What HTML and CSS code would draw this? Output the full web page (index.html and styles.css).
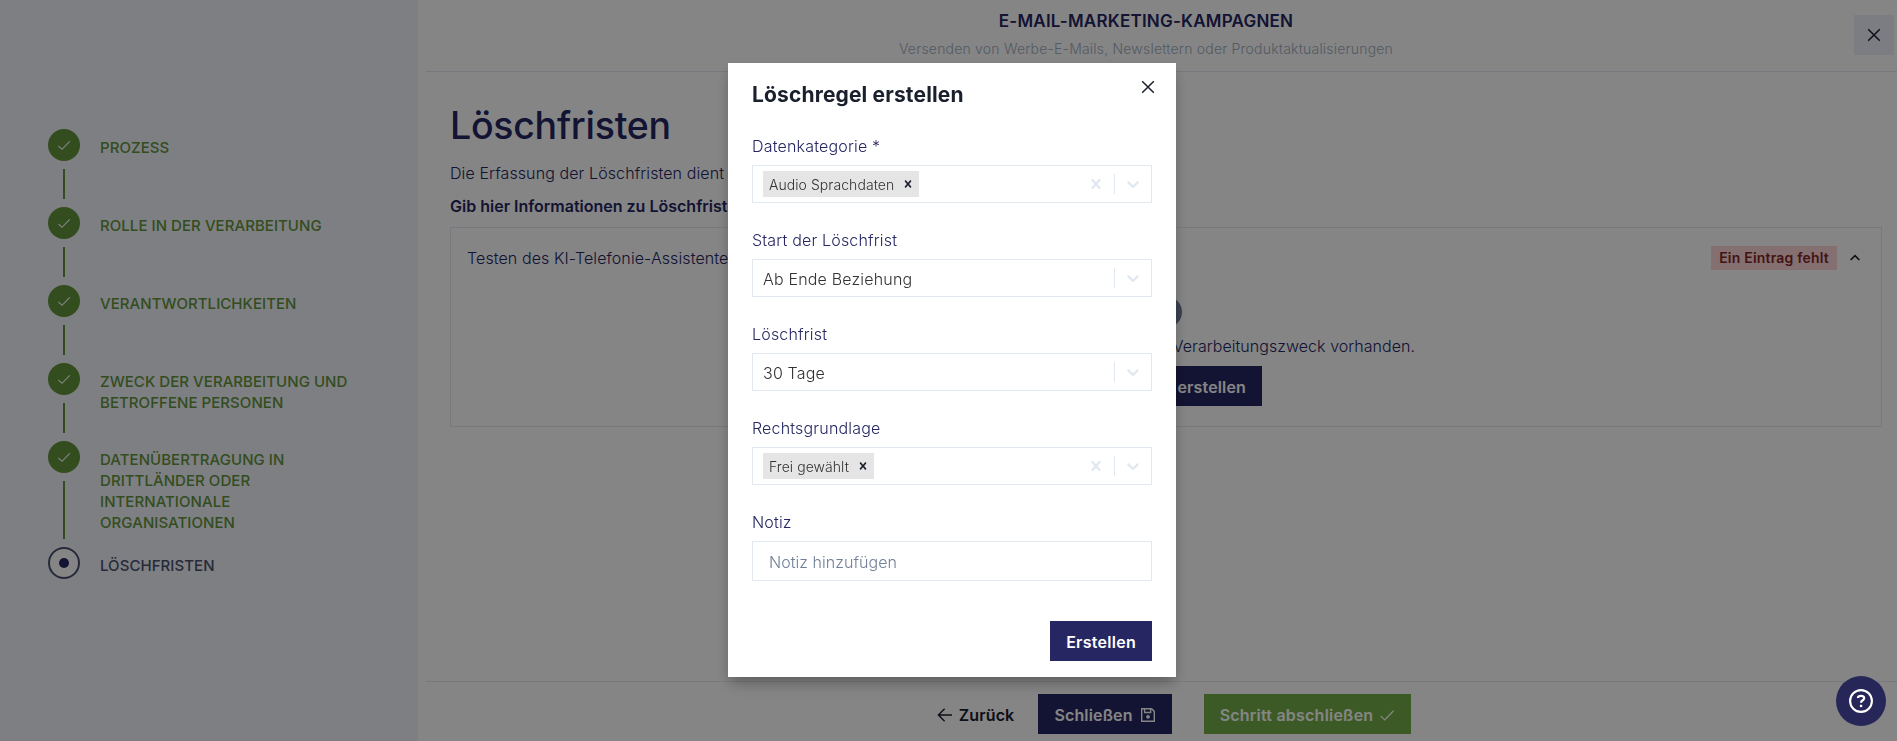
FILE: index.html
```html
<!DOCTYPE html>
<html lang="de">
<head>
    <meta charset="UTF-8">
    <meta name="viewport" content="width=device-width, initial-scale=1.0">
    <title>Löschfristen</title>
    <link rel="stylesheet" href="styles.css">
</head>
<body>
    <svg class="sprite">
        <symbol id="check" viewBox="0 0 16 16"><path d="M1.6 8.9 L5.7 12.9 L14.6 3.8" fill="none" stroke="currentColor" stroke-width="1.3"/></symbol>
        <symbol id="close" viewBox="0 0 16 16"><path d="M2.2 2.2 L13.8 13.8 M13.8 2.2 L2.2 13.8" fill="none" stroke="currentColor" stroke-width="1.5"/></symbol>
        <symbol id="cross" viewBox="0 0 20 20"><path fill="currentColor" d="M14.348 14.849c-0.469 0.469-1.229 0.469-1.697 0l-2.651-3.030-2.651 3.029c-0.469 0.469-1.229 0.469-1.697 0-0.469-0.469-0.469-1.229 0-1.697l2.758-3.15-2.759-3.152c-0.469-0.469-0.469-1.228 0-1.697s1.228-0.469 1.697 0l2.652 3.031 2.651-3.031c0.469-0.469 1.228-0.469 1.697 0s0.469 1.229 0 1.697l-2.758 3.152 2.758 3.15c0.469 0.469 0.469 1.229 0 1.698z"/></symbol>
        <symbol id="down" viewBox="0 0 20 20"><path fill="currentColor" d="M4.516 7.548c0.436-0.446 1.043-0.481 1.576 0l3.908 3.747 3.908-3.747c0.533-0.481 1.141-0.446 1.574 0 0.436 0.445 0.408 1.197 0 1.615-0.406 0.418-4.695 4.502-4.695 4.502-0.217 0.223-0.502 0.335-0.787 0.335s-0.57-0.112-0.789-0.335c0 0-4.287-4.084-4.695-4.502s-0.436-1.17 0-1.615z"/></symbol>
    </svg>

    <div class="page">
        <aside class="sidebar">
            <div class="step done">
                <div class="marker"><span class="circle"><svg><use href="#check"/></svg></span><span class="line"></span></div>
                <div class="step-title">PROZESS</div>
            </div>
            <div class="step done">
                <div class="marker"><span class="circle"><svg><use href="#check"/></svg></span><span class="line"></span></div>
                <div class="step-title">ROLLE IN DER VERARBEITUNG</div>
            </div>
            <div class="step done">
                <div class="marker"><span class="circle"><svg><use href="#check"/></svg></span><span class="line"></span></div>
                <div class="step-title">VERANTWORTLICHKEITEN</div>
            </div>
            <div class="step done">
                <div class="marker"><span class="circle"><svg><use href="#check"/></svg></span><span class="line"></span></div>
                <div class="step-title">ZWECK DER VERARBEITUNG UND<br>BETROFFENE PERSONEN</div>
            </div>
            <div class="step done">
                <div class="marker"><span class="circle"><svg><use href="#check"/></svg></span><span class="line"></span></div>
                <div class="step-title">DATENÜBERTRAGUNG IN<br>DRITTLÄNDER ODER<br>INTERNATIONALE<br>ORGANISATIONEN</div>
            </div>
            <div class="step active">
                <div class="marker"><span class="circle"><span class="dot"></span></span></div>
                <div class="step-title">LÖSCHFRISTEN</div>
            </div>
        </aside>

        <main class="main">
            <header class="header">
                <div class="header-title">E-MAIL-MARKETING-KAMPAGNEN</div>
                <div class="header-sub">Versenden von Werbe-E-Mails, Newslettern oder Produktaktualisierungen</div>
                <button class="header-close"><svg><use href="#close"/></svg></button>
            </header>

            <section class="content">
                <h1>Löschfristen</h1>
                <p class="intro">Die Erfassung der Löschfristen dient</p>
                <p class="hint">Gib hier Informationen zu Löschfristen</p>
                <div class="card">
                    <div class="card-head">
                        <span>Testen des KI-Telefonie-Assistenten</span>
                        <span class="badge">Ein Eintrag fehlt</span>
                        <svg class="chevron-up" viewBox="0 0 16 16"><path d="M3.6 10 L8 5.7 L12.4 10" fill="none" stroke="currentColor" stroke-width="1.6"/></svg>
                    </div>
                    <div class="empty">
                        <span class="empty-icon"></span>
                        <p>Es ist keine Löschregel für diesen Verarbeitungszweck vorhanden.</p>
                        <button class="btn navy">Löschregel erstellen</button>
                    </div>
                </div>
            </section>

            <footer class="footer">
                <button class="btn ghost">
                    <svg viewBox="0 0 16 16"><path d="M15 8 H1.6 M7.6 1.8 L1.4 8 L7.6 14.2" fill="none" stroke="currentColor" stroke-width="1.4"/></svg>
                    Zurück
                </button>
                <button class="btn navy save">
                    Schließen
                    <svg viewBox="0 0 16 16"><path d="M1.7 1.7 H11.6 L14.3 4.4 V14.3 H1.7 Z M4.6 1.7 V5.5 H10.6 V1.7" fill="none" stroke="currentColor" stroke-width="1.4"/><circle cx="8" cy="9.8" r="1.9" fill="currentColor"/></svg>
                </button>
                <button class="btn green">
                    Schritt abschließen
                    <svg><use href="#check"/></svg>
                </button>
            </footer>
        </main>
    </div>

    <div class="overlay">
        <div class="modal">
            <div class="modal-header">Löschregel erstellen</div>
            <button class="modal-close"><svg><use href="#close"/></svg></button>
            <div class="modal-body">
                <div class="field">
                    <label>Datenkategorie *</label>
                    <div class="select">
                        <div class="value"><span class="chip">Audio Sprachdaten<svg><use href="#cross"/></svg></span></div>
                        <svg class="indicator"><use href="#cross"/></svg>
                        <span class="separator"></span>
                        <svg class="indicator"><use href="#down"/></svg>
                    </div>
                </div>
                <div class="field">
                    <label>Start der Löschfrist</label>
                    <div class="select">
                        <div class="value">Ab Ende Beziehung</div>
                        <span class="separator"></span>
                        <svg class="indicator"><use href="#down"/></svg>
                    </div>
                </div>
                <div class="field">
                    <label>Löschfrist</label>
                    <div class="select">
                        <div class="value">30 Tage</div>
                        <span class="separator"></span>
                        <svg class="indicator"><use href="#down"/></svg>
                    </div>
                </div>
                <div class="field">
                    <label>Rechtsgrundlage</label>
                    <div class="select">
                        <div class="value"><span class="chip">Frei gewählt<svg><use href="#cross"/></svg></span></div>
                        <svg class="indicator"><use href="#cross"/></svg>
                        <span class="separator"></span>
                        <svg class="indicator"><use href="#down"/></svg>
                    </div>
                </div>
                <div class="field">
                    <label for="note">Notiz</label>
                    <input type="text" id="note" placeholder="Notiz hinzufügen">
                </div>
            </div>
            <div class="modal-footer">
                <button class="btn navy submit">Erstellen</button>
            </div>
        </div>
    </div>

    <button class="help">
        <svg viewBox="0 0 24 24"><circle cx="12" cy="12" r="10.9" fill="none" stroke="currentColor" stroke-width="2.1"/><path d="M8.9 9 C9 7.4 10.3 6.9 12 6.9 C13.8 6.9 15.2 7.7 15.2 9.3 C15.2 11.3 12 11.2 12 13.7" fill="none" stroke="currentColor" stroke-width="2.2"/><rect x="10.9" y="15.8" width="2.3" height="2.3" fill="currentColor"/></svg>
    </button>
</body>
</html>
```
FILE: styles.css
```css
* {
    box-sizing: border-box;
}
body {
    margin: 0;
    font-family: Inter, "Liberation Sans", sans-serif;
    font-size: 16px;
    font-weight: 300;
    line-height: 24px;
    letter-spacing: 0.1px;
    color: #252662;
    background: #fff;
    overflow: hidden;
}
p, h1 {
    margin: 0;
}
button {
    font-family: inherit;
    border: none;
    border-radius: 0;
    padding: 0;
    cursor: pointer;
}
svg {
    display: block;
    flex: none;
    width: 16px;
    height: 16px;
}
.sprite {
    display: none;
}
.page {
    display: flex;
    height: 100vh;
}

/* sidebar */
.sidebar {
    width: 418px;
    flex: none;
    padding: 129px 40px 0 48px;
    background: #f1f3f9;
}
.step {
    display: flex;
    min-height: 78px;
    font-size: 15px;
    font-weight: 500;
    line-height: 21px;
    letter-spacing: 0.05px;
}
.marker {
    display: flex;
    flex-direction: column;
    align-items: center;
    gap: 8px;
    padding-bottom: 8px;
    margin-right: 20px;
}
.circle {
    display: flex;
    align-items: center;
    justify-content: center;
    width: 32px;
    height: 32px;
    border-radius: 50%;
}
.circle svg {
    width: 14px;
    height: 14px;
}
.line {
    flex: 1;
    width: 2px;
    background: #62943c;
}
.step-title {
    padding: 8px 0 14px;
}
.done {
    color: #62943c;
}
.done .circle {
    background: #62943c;
    color: #fff;
}
.active {
    color: #4a5270;
}
.active .circle {
    border: 2px solid #4a5270;
    background: #fff;
}
.dot {
    width: 10px;
    height: 10px;
    border-radius: 50%;
    background: #252662;
}

/* main area */
.main {
    flex: 1;
    display: flex;
    flex-direction: column;
    padding-left: 8px;
}
.header {
    position: relative;
    height: 72px;
    padding: 8px 31px 0 0;
    border-bottom: 1px solid #e2e8f0;
    text-align: center;
}
.header-title {
    font-size: 17px;
    font-weight: 600;
    line-height: 26px;
    letter-spacing: 0.22px;
}
.header-sub {
    margin-top: 4px;
    font-size: 14px;
    line-height: 22px;
    letter-spacing: 0.2px;
    color: #a0aec0;
}
.header-close {
    position: absolute;
    top: 15px;
    right: 3px;
    display: flex;
    align-items: center;
    justify-content: center;
    width: 40px;
    height: 40px;
    background: #edf0f9;
    color: #1a202c;
}
.content {
    flex: 1;
    padding: 32px 15px 0 24px;
}
h1 {
    font-size: 37.5px;
    font-weight: 500;
    line-height: 44px;
    letter-spacing: -0.27px;
}
.intro {
    margin-top: 13px;
}
.hint {
    margin-top: 9px;
    font-weight: 600;
    letter-spacing: 0;
}
.card {
    margin-top: 9px;
    padding: 18px 18px 20px 16px;
    border: 1px solid #e2e8f0;
}
.card-head {
    display: flex;
    align-items: center;
}
.badge {
    margin-left: auto;
    padding: 0 8px;
    font-size: 14px;
    font-weight: 600;
    letter-spacing: 0.2px;
    color: #822727;
    background: #fed7d7;
}
.chevron-up {
    margin-left: 10px;
    color: #1a202c;
}
.empty {
    display: flex;
    flex-direction: column;
    align-items: center;
    padding: 26px 0 0 2px;
}
.empty-icon {
    width: 32px;
    height: 32px;
    border-radius: 50%;
    background: #718096;
}
.empty p {
    margin: 6px 0 8px;
    letter-spacing: 0.05px;
}
.btn {
    display: flex;
    align-items: center;
    gap: 7px;
    height: 40px;
    padding: 1px 16px 0;
    font-size: 16px;
    font-weight: 600;
    letter-spacing: 0.15px;
}
.navy {
    background: #252662;
    color: #fff;
}
.submit {
    letter-spacing: 0.27px;
}
.green {
    gap: 6px;
    margin-left: 32px;
    background: #73ad47;
    color: #fff;
    letter-spacing: 0.22px;
}
.ghost {
    gap: 6px;
    margin-right: 8px;
    background: none;
    color: #1a202c;
}
.footer {
    display: flex;
    justify-content: center;
    height: 60px;
    padding: 12px 0 0 9px;
    border-top: 1px solid #e2e8f0;
}

/* dialog */
.overlay {
    position: fixed;
    inset: 0;
    padding: 63px 0 0 7px;
    background: rgba(0, 0, 0, 0.48);
}
.modal {
    position: relative;
    width: 448px;
    height: 614px;
    margin: 0 auto;
    background: #fff;
    box-shadow: 0 10px 15px -3px rgba(0, 0, 0, 0.2), 0 4px 12px -1px rgba(0, 0, 0, 0.15);
}
.modal-header {
    padding: 17px 24px 0;
    margin-bottom: -1px;
    font-size: 21px;
    font-weight: 700;
    line-height: 30px;
    letter-spacing: 0.15px;
    color: #1a202c;
}
.modal-close {
    position: absolute;
    top: 16px;
    right: 20px;
    background: none;
    color: #1a202c;
}
.modal-body {
    display: flex;
    flex-direction: column;
    gap: 24px;
    padding: 24px;
}
.field label {
    display: block;
    padding-top: 1px;
    margin-bottom: 7px;
    letter-spacing: 0.18px;
}
.select {
    display: flex;
    align-items: center;
    height: 38px;
    border: 1px solid #e2e8f0;
}
.value {
    flex: 1;
    padding: 1px 0 0 10px;
    color: #333;
    letter-spacing: 0.18px;
}
.chip {
    display: inline-flex;
    align-items: center;
    height: 26px;
    margin-top: -1px;
    padding: 1px 4px 0 6px;
    font-size: 14px;
    letter-spacing: 0.06px;
    background: #e5e5e5;
    vertical-align: top;
}
.chip svg {
    width: 14px;
    height: 14px;
    margin: -2px 0 0 7px;
    color: #1a202c;
}
.indicator {
    width: 20px;
    height: 20px;
    margin: 0 8px;
    color: #e2e8f0;
}
.separator {
    width: 1px;
    height: 20px;
    background: #e2e8f0;
}
input {
    display: block;
    width: 100%;
    height: 40px;
    padding: 2px 16px 0;
    border: 1px solid #e2e8f0;
    border-radius: 0;
    font: inherit;
    letter-spacing: 0.04px;
}
input::placeholder {
    color: #718096;
}
.modal-footer {
    display: flex;
    justify-content: flex-end;
    padding: 16px 24px;
}

/* help button stays above the overlay */
.help {
    position: fixed;
    right: 11px;
    bottom: 15px;
    display: flex;
    align-items: center;
    justify-content: center;
    width: 50px;
    height: 50px;
    border-radius: 50%;
    background: #262758;
    color: #fff;
}
.help svg {
    width: 24px;
    height: 24px;
}
```
